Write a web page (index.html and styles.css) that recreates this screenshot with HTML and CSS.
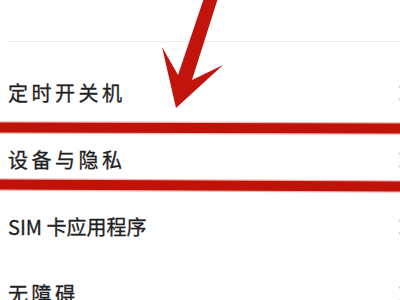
FILE: index.html
```html
<!DOCTYPE html>
<html lang="zh-CN">
<head>
<meta charset="utf-8">
<link rel="stylesheet" href="styles.css">
</head>
<body>
<div class="screen">
  <div class="list">
    <div class="row top"><span class="label">手机管家</span></div>
    <div class="divider"></div>
    <div class="row"><span class="label">定时开关机</span><svg class="chev" viewBox="0 0 10 16"><path d="M1 1 L8 8 L1 15"/></svg></div>
    <div class="row"><span class="label">设备与隐私</span><svg class="chev" viewBox="0 0 10 16"><path d="M1 1 L8 8 L1 15"/></svg></div>
    <div class="row"><span class="label tight">SIM 卡应用程序</span><svg class="chev" viewBox="0 0 10 16"><path d="M1 1 L8 8 L1 15"/></svg></div>
    <div class="row"><span class="label">无障碍</span><svg class="chev" viewBox="0 0 10 16"><path d="M1 1 L8 8 L1 15"/></svg></div>
  </div>
  <svg class="annot" viewBox="0 0 400 300" width="400" height="300">
    <line class="band-glow" x1="0" y1="127.5" x2="400" y2="128.5"/>
    <line class="band" x1="0" y1="127.5" x2="400" y2="128.5"/>
    <line class="band-glow" x1="0" y1="184.5" x2="400" y2="186.5"/>
    <line class="band" x1="0" y1="184.5" x2="400" y2="186.5"/>
    <polygon class="arrow" points="204,-2 218,-2 192,80 223,65 176,108 162,47 178,75"/>
  </svg>
</div>
</body>
</html>
```

FILE: styles.css
```css
html, body {
  margin: 0;
  padding: 0;
  background: #ffffff;
}
.screen {
  position: relative;
  width: 400px;
  height: 300px;
  overflow: hidden;
  background: #ffffff;
}
.list {
  display: flex;
  flex-direction: column;
}
.row {
  display: flex;
  align-items: center;
  justify-content: space-between;
  height: 67px;
  padding-left: 8px;
  flex-shrink: 0;
}
.row.top {
  margin-top: -47px;
}
.divider {
  height: 1px;
  background: #ededed;
  margin: 21px 0 17px 8px;
  flex-shrink: 0;
}
.label {
  font-family: "Noto Sans CJK SC", "Noto Sans", sans-serif;
  font-size: 20px;
  letter-spacing: 3.5px;
  color: #222222;
  white-space: nowrap;
  -webkit-text-stroke: 0.3px #222222;
}
.label.tight {
  letter-spacing: 0;
}
.chev {
  width: 10px;
  height: 16px;
  margin-right: -8px;
  flex-shrink: 0;
}
.chev path {
  fill: none;
  stroke: #c6c6c6;
  stroke-width: 1.5;
}
.annot {
  position: absolute;
  left: 0;
  top: 0;
}
.band {
  stroke: #bf1208;
  stroke-width: 10;
}
.band-glow {
  stroke: #f0b4b0;
  stroke-width: 12.5;
}
.arrow {
  fill: #c0140c;
}
```
